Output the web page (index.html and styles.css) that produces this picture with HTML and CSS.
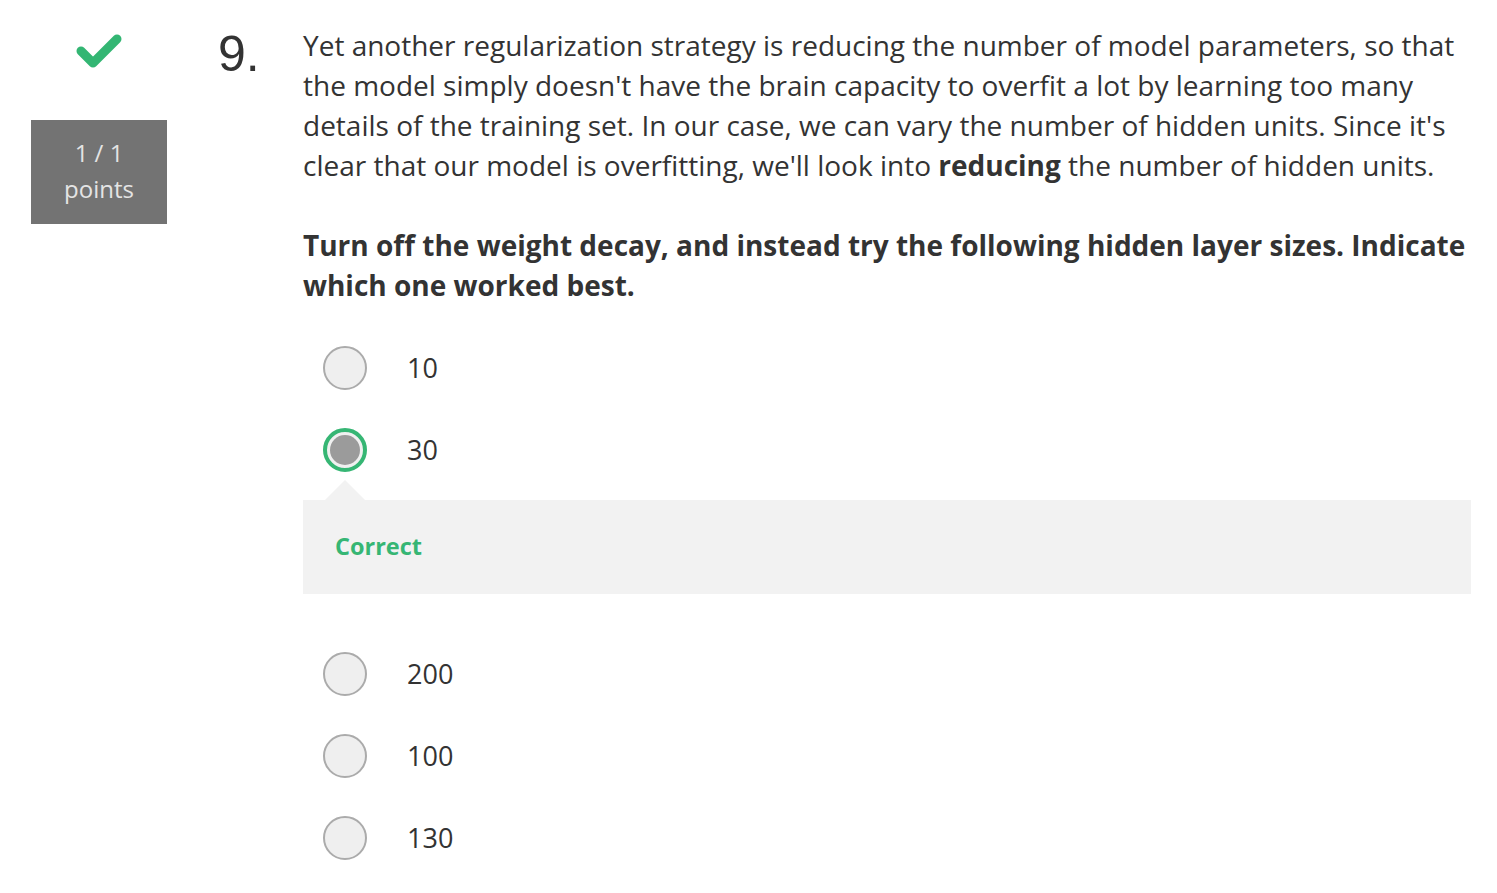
FILE: index.html
```html
<!DOCTYPE html>
<html>
<head>
<meta charset="utf-8">
<link rel="stylesheet" href="styles.css">
</head>
<body>
<div class="question">
  <div class="status">
    <svg class="check" width="46" height="36" viewBox="0 0 46 36">
      <path d="M5 18 L17 30 L41 6" fill="none" stroke="#33b673" stroke-width="9" stroke-linecap="round" stroke-linejoin="round"/>
    </svg>
    <div class="points">
      <div>1 / 1</div>
      <div>points</div>
    </div>
  </div>
  <div class="number">9.</div>
  <div class="content">
    <p class="prompt">Yet another regularization strategy is reducing the number of model parameters, so that the model simply doesn't have the brain capacity to overfit a lot by learning too many details of the training set. In our case, we can vary the number of hidden units. Since it's clear that our model is overfitting, we'll look into <strong>reducing</strong> the number of hidden units.</p>
    <p class="prompt bold">Turn off the weight decay, and instead try the following hidden layer sizes. Indicate which one worked best.</p>
    <div class="options">
      <div class="option"><span class="radio"></span><span class="label">10</span></div>
      <div class="option"><span class="radio selected"><span class="dot"></span></span><span class="label">30</span></div>
      <div class="feedback"><span class="correct">Correct</span></div>
      <div class="option"><span class="radio"></span><span class="label">200</span></div>
      <div class="option"><span class="radio"></span><span class="label">100</span></div>
      <div class="option"><span class="radio"></span><span class="label">130</span></div>
    </div>
  </div>
</div>
</body>
</html>
```
FILE: styles.css
```css
html, body {
  margin: 0;
  padding: 0;
  background: #fff;
}
body {
  font-family: "Open Sans", "Liberation Sans", sans-serif;
  color: #333;
}
.question {
  display: flex;
  align-items: flex-start;
  padding-left: 31px;
}
.status {
  width: 136px;
  display: flex;
  flex-direction: column;
  align-items: center;
  padding-top: 33px;
}
.check {
  display: block;
}
.points {
  margin-top: 51px;
  width: 136px;
  height: 104px;
  box-sizing: border-box;
  background: #737373;
  color: #e4e4e4;
  font-size: 24px;
  line-height: 36px;
  text-align: center;
  padding-top: 15px;
}
.number {
  width: 85px;
  margin-left: 51px;
  font-family: "Liberation Sans", Arial, sans-serif;
  font-size: 50px;
  line-height: 50px;
  padding-top: 29px;
  color: #333;
}
.content {
  width: 1168px;
  padding-top: 25px;
}
.prompt {
  margin: 0 0 40px 0;
  font-size: 28px;
  line-height: 40px;
}
.prompt.bold {
  margin-bottom: 41px;
}
.prompt strong, .bold {
  font-weight: 700;
}
.options {
  display: flex;
  flex-direction: column;
  padding-left: 20px;
}
.option {
  display: flex;
  align-items: center;
  height: 44px;
  margin-bottom: 38px;
}
.radio {
  width: 44px;
  height: 44px;
  box-sizing: border-box;
  border: 2px solid #ababab;
  border-radius: 50%;
  background: #efefef;
  display: flex;
  align-items: center;
  justify-content: center;
  flex: none;
}
.radio.selected {
  border: 4px solid #36b674;
  background: #f0f0f0;
}
.dot {
  width: 30px;
  height: 30px;
  border-radius: 50%;
  background: #9b9b9b;
}
.label {
  margin-left: 40px;
  font-size: 27px;
  line-height: 40px;
}
.feedback {
  position: relative;
  margin: -10px 0 58px -20px;
  height: 94px;
  box-sizing: border-box;
  padding-bottom: 3px;
  background: #f2f2f2;
  display: flex;
  align-items: center;
  padding-left: 32px;
}
.feedback::before {
  content: "";
  position: absolute;
  left: 22px;
  top: -20px;
  border-left: 20px solid transparent;
  border-right: 20px solid transparent;
  border-bottom: 20px solid #f2f2f2;
}
.correct {
  color: #36b674;
  font-weight: 700;
  font-size: 23.5px;
}
```
